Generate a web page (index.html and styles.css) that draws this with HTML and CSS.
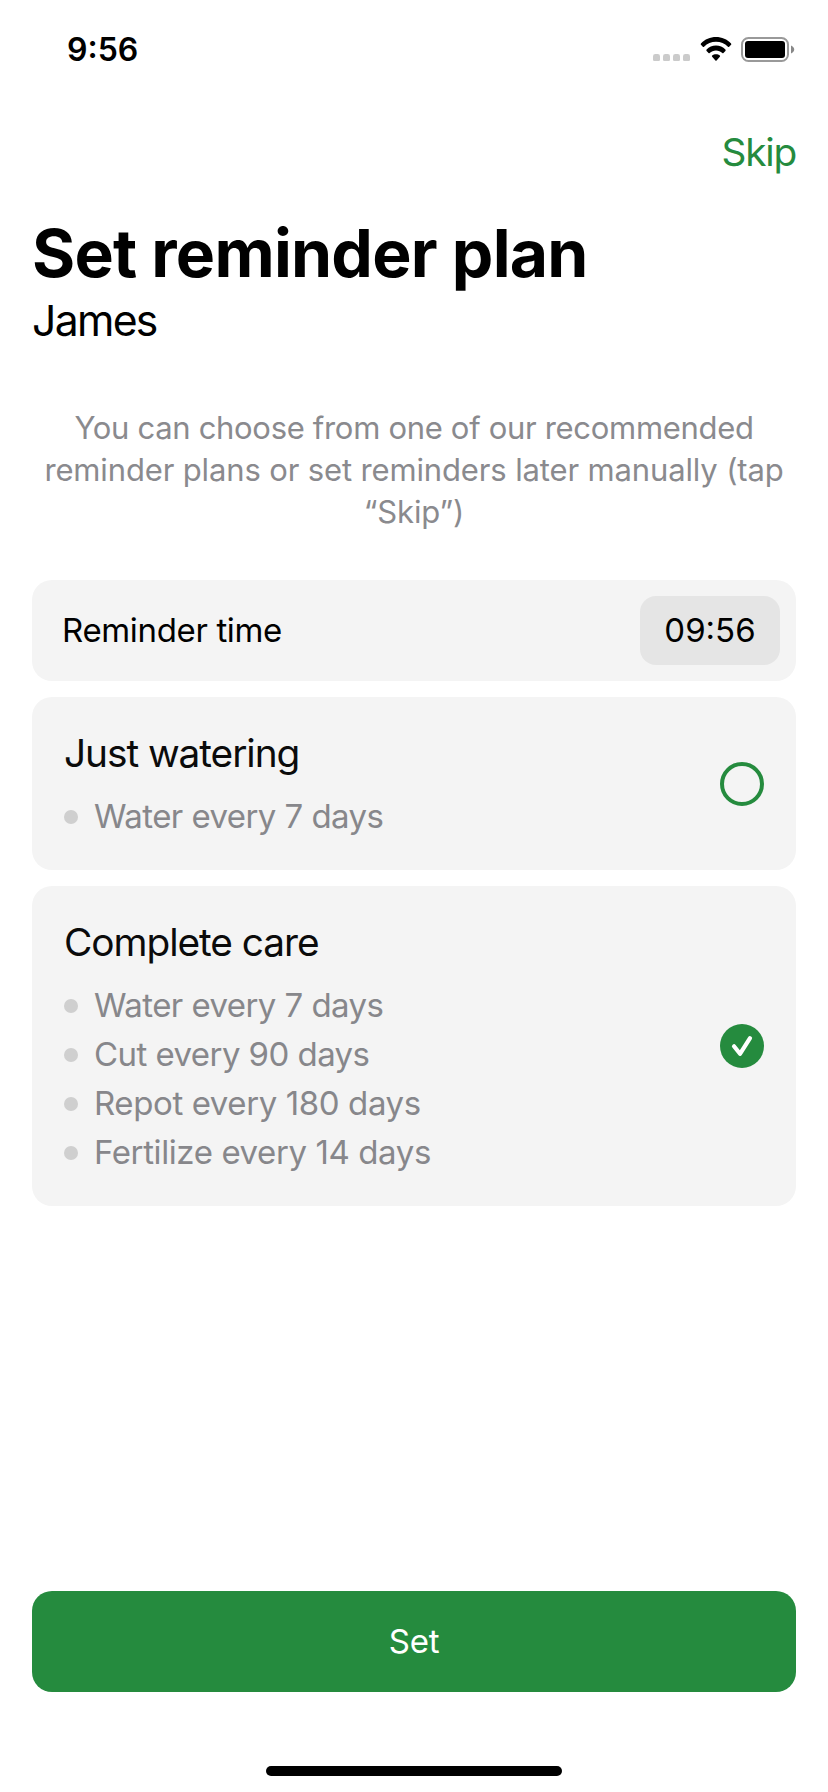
FILE: index.html
```html
<!DOCTYPE html>
<html lang="en">
<head>
<meta charset="utf-8">
<title>Set reminder plan</title>
<link rel="stylesheet" href="styles.css">
</head>
<body>
<header class="status">
  <span class="clock">9:56</span>
  <div class="indicators">
    <svg class="dots" width="37" height="7.500" viewBox="0 0 37 7.500"><g fill="#cbcbcb"><rect width="7" height="7.500" rx="2.300"/><rect x="10" width="7" height="7.500" rx="2.300"/><rect x="20" width="7" height="7.500" rx="2.300"/><rect x="30" width="7" height="7.500" rx="2.300"/></g></svg>
    <svg class="wifi" width="32" height="24" viewBox="0 0 34 24" preserveAspectRatio="none"><path d="M17 0C23.2 0 28.9 2.4 33 6.4c.4.4.4.9 0 1.3l-2 2c-.4.4-.9.4-1.300 0C26.300 6.500 21.900 4.700 17 4.700S7.700 6.500 4.300 9.700c-.4.400-.9.400-1.300 0l-2-2c-.4-.4-.4-.9 0-1.300C5.100 2.400 10.800 0 17 0z"/><path d="M17 8.600c3.900 0 7.400 1.500 10 4 .4.400.4.900 0 1.300l-2.100 2.100c-.4.400-.8.400-1.200 0-1.800-1.600-4.100-2.600-6.700-2.600s-4.900 1-6.700 2.600c-.4.400-.8.400-1.200 0L7 13.900c-.4-.4-.4-.9 0-1.300 2.600-2.500 6.100-4 10-4z"/><path d="M17 17.200c1.600 0 3 .5 4.100 1.400.4.400.4.800 0 1.200l-3.500 3.600c-.4.400-.8.400-1.200 0l-3.500-3.600c-.4-.4-.4-.8 0-1.200 1.100-.9 2.500-1.400 4.100-1.400z"/></svg>
    <svg class="battery" width="54" height="26" viewBox="0 0 54 26"><rect x="1" y="1" width="46" height="23" rx="6.500" fill="none" stroke="#999" stroke-width="2"/><rect x="4" y="4" width="40" height="17" rx="3"/><path d="M50 8.500c2 .8 3.200 2.300 3.200 4s-1.200 3.200-3.200 4z" fill="#888"/></svg>
  </div>
</header>
<main class="screen">
  <a class="skip">Skip</a>
  <h1 class="title">Set reminder plan</h1>
  <p class="name">James</p>
  <p class="intro"><span class="intro-lead">You can choose from one of our recommended</span><br>reminder plans or set reminders later manually (tap<br>“Skip”)</p>
  <section class="cards">
    <div class="card time-card"><span class="label">Reminder time</span><span class="time">09:56</span></div>
    <div class="card plan">
      <div class="plan-text">
        <h2 class="plan-title">Just watering</h2>
        <ul class="tasks"><li class="task">Water every 7 days</li></ul>
      </div>
      <span class="radio"></span>
    </div>
    <div class="card plan">
      <div class="plan-text">
        <h2 class="plan-title">Complete care</h2>
        <ul class="tasks">
          <li class="task">Water every 7 days</li>
          <li class="task">Cut every 90 days</li>
          <li class="task">Repot every 180 days</li>
          <li class="task">Fertilize every 14 days</li>
        </ul>
      </div>
      <svg class="check" width="44" height="44" viewBox="0 0 44 44"><circle cx="22" cy="22" r="22" fill="#258b3e"/><path d="M14 22.300l6 7.500L30 14.200" fill="none" stroke="#fff" stroke-width="4.200" stroke-linecap="round" stroke-linejoin="round"/></svg>
    </div>
  </section>
  <button class="set">Set</button>
</main>
<div class="home"></div>
</body>
</html>
```
FILE: styles.css
```css
* { box-sizing: border-box; margin: 0; padding: 0; }
body {
  width: 828px;
  height: 1792px;
  display: flex;
  flex-direction: column;
  background: #fff;
  color: #000;
  font-family: Inter, sans-serif;
  overflow: hidden;
}
.status {
  height: 100px;
  display: flex;
  justify-content: space-between;
  padding: 30px 33px 0 67px;
}
.clock { font-size: 32px; line-height: 40px; font-weight: 600; }
.indicators { display: flex; align-items: flex-start; }
.dots { margin: 23.700px 9.500px 0 0; }
.wifi { margin: 7px 9.500px 0 0; }
.battery { margin: 7px 0 0; }
.screen {
  flex: 1;
  display: flex;
  flex-direction: column;
  padding: 28px 32px 0;
}
.skip { align-self: flex-end; margin-right: 0; font-size: 38.800px; line-height: 48px; letter-spacing: -1.200px; color: #258b3e; }
.title { margin-top: 37px; font-size: 66px; line-height: 80px; font-weight: 700; letter-spacing: -0.750px; }
.name { margin-top: 2px; font-size: 42.700px; line-height: 52px; letter-spacing: -1.700px; }
.intro { margin-top: 60px; font-size: 31px; line-height: 42px; letter-spacing: -0.140px; text-align: center; color: #8a8a8e; white-space: nowrap; }
.intro-lead { letter-spacing: -0.310px; }
.cards { margin-top: 47px; display: flex; flex-direction: column; gap: 16px; }
.card { background: #f4f4f4; border-radius: 20px; display: flex; align-items: center; justify-content: space-between; }
.time-card { height: 101px; padding: 0 16px 0 30px; font-size: 33px; line-height: 40px; }
.label { letter-spacing: -0.350px; padding-bottom: 2px; }
.time { width: 140px; height: 69px; padding-bottom: 2px; border-radius: 16px; background: #e5e5e5; display: flex; align-items: center; justify-content: center; }
.plan { padding: 32px 32px 29px; }
.plan-title { font-size: 38.800px; line-height: 48px; font-weight: 400; letter-spacing: -1.050px; color: #0b0b0b; }
.tasks { margin-top: 15px; list-style: none; }
.task { height: 49px; display: flex; align-items: center; gap: 16px; font-size: 33px; line-height: 51px; letter-spacing: -0.560px; color: #87878b; }
.task:nth-child(n+3) { letter-spacing: -0.400px; }
.task::before { content: ""; width: 14px; height: 14px; border-radius: 50%; background: #cfcfcf; }
.radio, .check { margin-bottom: 3px; }
.radio { width: 44px; height: 44px; border: 4px solid #258b3e; border-radius: 50%; }
.set { margin-top: auto; height: 101px; padding-bottom: 2px; border: 0; border-radius: 20px; background: #258b3e; color: #fff; font: 33px Inter, sans-serif; letter-spacing: -0.300px; }
.home { width: 296px; height: 10px; border-radius: 5px; background: #000; margin: 74px auto 16px; }
```
